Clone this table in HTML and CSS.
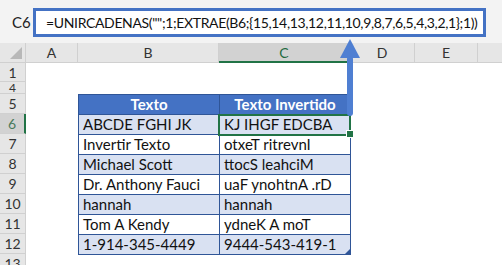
FILE: index.html
```html
<!DOCTYPE html>
<html lang="es">
<head>
    <meta charset="UTF-8">
    <title>UNIRCADENAS - Invertir texto</title>
    <link rel="stylesheet" href="styles.css">
</head>
<body>
    <div class="app">
        <div class="formula-bar">
            <div class="name-box">C6</div>
            <div class="formula">=UNIRCADENAS("";1;EXTRAE(B6;{15,14,13,12,11,10,9,8,7,6,5,4,3,2,1};1))</div>
        </div>

        <div class="sheet">
            <div class="corner"><span class="corner-tri"></span></div>
            <div class="col-headers">
                <div class="col-head col-a">A</div>
                <div class="col-head col-b">B</div>
                <div class="col-head col-c active">C</div>
                <div class="col-head col-d">D</div>
                <div class="col-head col-e">E</div>
                <div class="col-head col-f"></div>
            </div>
            <div class="row-headers">
                <div class="row-head r1">1</div>
                <div class="row-head r4">4</div>
                <div class="row-head">5</div>
                <div class="row-head active">6</div>
                <div class="row-head">7</div>
                <div class="row-head">8</div>
                <div class="row-head">9</div>
                <div class="row-head">10</div>
                <div class="row-head">11</div>
                <div class="row-head">12</div>
                <div class="row-head">13</div>
            </div>
            <div class="grid-body">
                <div class="table">
                    <div class="th">Texto</div>
                    <div class="th">Texto Invertido</div>

                    <div class="td band">ABCDE FGHI JK</div>
                    <div class="td band selected">KJ IHGF EDCBA</div>

                    <div class="td">Invertir Texto</div>
                    <div class="td">otxeT ritrevnI</div>

                    <div class="td band">Michael Scott</div>
                    <div class="td band">ttocS leahciM</div>

                    <div class="td">Dr. Anthony Fauci</div>
                    <div class="td">uaF ynohtnA .rD</div>

                    <div class="td band">hannah</div>
                    <div class="td band">hannah</div>

                    <div class="td">Tom A Kendy</div>
                    <div class="td">ydneK A moT</div>

                    <div class="td band last">1-914-345-4449</div>
                    <div class="td band last corner-cell">9444-543-419-1</div>
                </div>
            </div>
        </div>

        <!-- arrow pointing at the formula -->
        <svg class="arrow" width="22" height="80" viewBox="0 0 22 80">
            <path d="M11 1 L21 20 L1 20 Z" fill="#4f7fd2"/>
            <rect x="8" y="18" width="6" height="60" rx="3" fill="#4f7fd2"/>
        </svg>
    </div>
</body>
</html>
```

FILE: styles.css
```css
* {
    box-sizing: border-box;
}
body {
    margin: 0;
    font-family: 'Lato', 'Open Sans', sans-serif;
    background: #ffffff;
}
.app {
    position: relative;
    width: 502px;
    height: 265px;
    overflow: hidden;
}

/* Formula bar */
.formula-bar {
    height: 43px;
    background-color: #f3f3f3;
    display: flex;
    align-items: flex-start;
    padding-top: 8px;
}
.name-box {
    width: 33px;
    height: 29px;
    line-height: 29px;
    padding-left: 12px;
    font-size: 15px;
    color: #222;
}
.formula {
    width: 453px;
    height: 29px;
    background: #ffffff;
    border: 3px solid #4472c4;
    padding-left: 10px;
    line-height: 23px;
    font-size: 14px;
    letter-spacing: -0.35px;
    color: #111;
    white-space: nowrap;
}

/* Sheet */
.sheet {
    display: grid;
    grid-template-columns: 26px 1fr;
    grid-template-rows: 20px 1fr;
    height: 222px;
}
.corner {
    background: #e6e6e6;
    border-right: 1px solid #d0d0d0;
    border-bottom: 1px solid #d0d0d0;
    position: relative;
}
.corner-tri {
    position: absolute;
    right: 3px;
    bottom: 3px;
    width: 0;
    height: 0;
    border-left: 12px solid transparent;
    border-bottom: 12px solid #b8b8b8;
}
.col-headers {
    display: flex;
    background: #e6e6e6;
    border-bottom: 1px solid #d0d0d0;
}
.col-head {
    border-right: 1px solid #d0d0d0;
    text-align: center;
    font-size: 14px;
    line-height: 19px;
    color: #333;
}
.col-a { width: 52px; }
.col-b { width: 141px; }
.col-c { width: 131px; }
.col-d { width: 65px; }
.col-e { width: 63px; }
.col-f { flex: 1; border-right: none; }
.col-head.active {
    background: #d2d2d2;
    color: #1e6b3f;
    border-bottom: 2px solid #217346;
    margin-bottom: -1px;
}

.row-headers {
    display: flex;
    flex-direction: column;
    background: #e6e6e6;
    border-right: 1px solid #d0d0d0;
}
.row-head {
    height: 20px;
    flex-shrink: 0;
    border-bottom: 1px solid #d0d0d0;
    text-align: center;
    font-size: 14px;
    line-height: 20px;
    color: #333;
}
.row-head.r1 {
    height: 19px;
    line-height: 19px;
}
.row-head.r4 {
    height: 12px;
    line-height: 11px;
    font-size: 12px;
    overflow: hidden;
}
.row-head.active {
    background: #d2d2d2;
    color: #4a7a5c;
    border-right: 2px solid #217346;
    margin-right: -1px;
}

.grid-body {
    background: #ffffff;
    padding-left: 52px;
    padding-top: 31px;
}

/* Data table */
.table {
    display: grid;
    grid-template-columns: 141px 131px;
    grid-auto-rows: 20px;
    width: 273px;
    border-left: 1px solid #2f5597;
    border-top: 1px solid #2f5597;
}
.th, .td {
    border-right: 1px solid #2f5597;
    border-bottom: 1px solid #2f5597;
    font-size: 15px;
    line-height: 19px;
    white-space: nowrap;
    padding-left: 4px;
    color: #111;
}
.th {
    background: #4472c4;
    color: #ffffff;
    font-weight: bold;
    text-align: center;
    padding-left: 0;
}
.td.band {
    background: #d9e1f2;
}
.td.selected {
    position: relative;
}
.td.selected::after {
    content: "";
    position: absolute;
    left: -2px;
    top: -1px;
    right: -1px;
    bottom: -2px;
    border: 2px solid #217346;
}
.td.selected::before {
    content: "";
    position: absolute;
    right: -4px;
    bottom: -4px;
    width: 6px;
    height: 6px;
    background: #217346;
    border: 1px solid #ffffff;
    z-index: 1;
}
.corner-cell {
    position: relative;
}
.corner-cell::after {
    content: "";
    position: absolute;
    right: 0;
    bottom: 0;
    border-left: 5px solid transparent;
    border-bottom: 5px solid #2f5597;
}

.arrow {
    position: absolute;
    left: 339px;
    top: 38px;
}
```
